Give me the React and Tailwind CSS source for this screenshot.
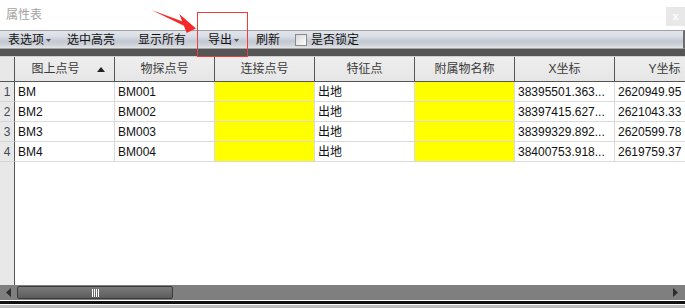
import React from 'react';

const font = { fontFamily: '"Liberation Sans", "Noto Sans CJK SC", sans-serif' };

const columns = ['图上点号', '物探点号', '连接点号', '特征点', '附属物名称', 'X坐标', 'Y坐标'];

const rows = [
  { no: 1, a: 'BM', b: 'BM001', x: '38395501.363...', y: '2620949.95' },
  { no: 2, a: 'BM2', b: 'BM002', x: '38397415.627...', y: '2621043.33' },
  { no: 3, a: 'BM3', b: 'BM003', x: '38399329.892...', y: '2620599.78' },
  { no: 4, a: 'BM4', b: 'BM004', x: '38400753.918...', y: '2619759.37' },
];

const Caret = () => (
  <svg width="5" height="3" viewBox="0 0 5 3" className="ml-[2px] mt-[1px]">
    <path d="M0 0 H5 L2.5 3 Z" fill="#555" />
  </svg>
);

const App = () => {
  return (
    <div className="relative w-[685px] h-[308px] overflow-hidden bg-white text-[12px]" style={font}>
      {/* Title bar */}
      <div className="h-[30px] flex items-start justify-between">
        <span className="pl-[6px] pt-[6px] text-[#a3a3a3] text-[12px]">属性表</span>
        <div className="mt-[7px] w-[19px] h-[19px] bg-[#e8e8e8] flex items-center justify-center text-white text-[11px] font-bold leading-none">
          x
        </div>
      </div>

      {/* Toolbar */}
      <div className="h-[19px] flex items-center border-t border-[#9ea1a7] border-b border-b-[#a6a6a6] border-r-2 border-r-[#6d6d6d] bg-[linear-gradient(#e2e5eb,#dadee6_30%,#c3c7d2_60%,#d0d4db_85%,#e6e6e6)] text-[#111]">
        <div className="flex items-center ml-[8px] w-[59px]">
          表选项<Caret />
        </div>
        <div className="w-[71px]">选中高亮</div>
        <div className="w-[70px]">显示所有</div>
        <div className="flex items-center w-[48px]">
          导出<Caret />
        </div>
        <div className="w-[39px]">刷新</div>
        <div className="w-[12px] h-[12px] border border-[#8a8a8a] bg-[linear-gradient(135deg,#d8d8d8,#fdfdfd)] mr-[4px]" />
        <div>是否锁定</div>
      </div>

      {/* dark strip */}
      <div className="h-[8px] bg-[#555555] border-b border-[#cfcfcf]" />

      {/* Grid */}
      <div className="flex flex-col h-[228px]">
        {/* header */}
        <div className="flex h-[25px] bg-[linear-gradient(#eeeeee,#e6e6e6)] border-b border-[#555] text-[#3a3a3a] shrink-0">
          <div className="w-[15px] shrink-0 border-r border-[#555] bg-[#e8e8e8]" />
          {columns.map((c, i) => (
            <div key={c} className="w-[100px] shrink-0 border-r border-[#555] flex items-center relative">
              {i === 0 ? (
                <>
                  <div className="w-[81px] text-center">{c}</div>
                  <svg width="8" height="5" viewBox="0 0 8 5" className="absolute left-[82px] top-[10px]">
                    <path d="M0 5 L4 0 L8 5 Z" fill="#222" />
                  </svg>
                </>
              ) : (
                <div className="w-full text-center">{c}</div>
              )}
            </div>
          ))}
        </div>

        {rows.map((r) => (
          <div key={r.no} className="flex h-[20px] shrink-0 text-[#111]">
            <div className="w-[15px] shrink-0 bg-[#e8e8e8] border-r border-[#555] border-b border-b-[#d6d6d6] flex items-center justify-center text-[#404a55]">
              {r.no}
            </div>
            <div className="w-[100px] shrink-0 border-r border-b border-[#dadada] flex items-center pl-[3px]">{r.a}</div>
            <div className="w-[100px] shrink-0 border-r border-b border-[#dadada] flex items-center pl-[3px]">{r.b}</div>
            <div className="w-[100px] shrink-0 border-r border-b border-[#dadada] bg-[#ffff00]" />
            <div className="w-[100px] shrink-0 border-r border-b border-[#dadada] flex items-center pl-[3px]">出地</div>
            <div className="w-[100px] shrink-0 border-r border-b border-[#dadada] bg-[#ffff00]" />
            <div className="w-[100px] shrink-0 border-r border-b border-[#dadada] flex items-center pl-[3px]">{r.x}</div>
            <div className="w-[100px] shrink-0 border-r border-b border-[#dadada] flex items-center pl-[3px] whitespace-nowrap">{r.y}</div>
          </div>
        ))}

        {/* empty area */}
        <div className="flex flex-1">
          <div className="w-[15px] shrink-0 bg-[#e8e8e8] border-r border-[#555]" />
          <div className="flex-1 bg-white" />
        </div>
      </div>

      {/* Horizontal scrollbar */}
      <div className="h-[15px] bg-[#7f7f7f] flex items-center relative">
        <svg width="5" height="9" viewBox="0 0 5 9" className="ml-[6px]">
          <path d="M5 0 V9 L0 4.5 Z" fill="#2e2e2e" />
        </svg>
        <div className="ml-[6px] w-[156px] h-[13px] rounded-[2px] border border-[#3b3b3b] bg-[linear-gradient(#7a7a7a,#5c5c5c)] flex items-center justify-center">
          <div className="flex gap-[1px] h-[8px]">
            <div className="w-[1px] bg-white" />
            <div className="w-[1px] bg-white" />
            <div className="w-[1px] bg-white" />
            <div className="w-[1px] bg-white" />
          </div>
        </div>
        <svg width="5" height="9" viewBox="0 0 5 9" className="absolute left-[673px] top-[3px]">
          <path d="M0 0 V9 L5 4.5 Z" fill="#2e2e2e" />
        </svg>
      </div>

      {/* bottom edge */}
      <div className="h-[1px] bg-white" />
      <div className="h-[3px] bg-[#111]" />
      <div className="h-[1px] bg-white" />
      <div className="h-[3px] bg-[#bdbdbd]" />

      {/* annotation: red arrow and box */}
      <svg width="685" height="60" className="absolute left-0 top-0 pointer-events-none">
        <polygon points="151.5,10 182.1,21.2 179.3,14 196,28.5 186.7,33 183.9,25.8" fill="#f42a2a" />
      </svg>
      <div className="absolute left-[197px] top-[12px] w-[51px] h-[45px] border border-[#ee3b3b] pointer-events-none" />
    </div>
  );
};

export default App;
